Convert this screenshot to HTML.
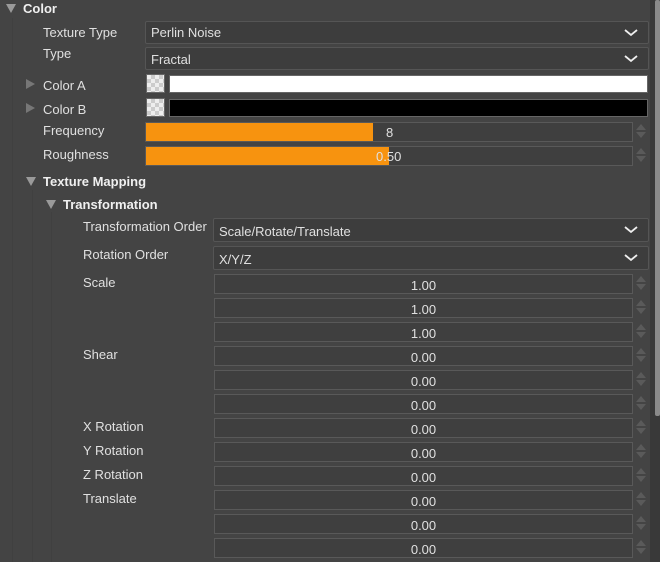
<!DOCTYPE html>
<html><head><style>
body{margin:0;width:660px;height:562px;background:#444;overflow:hidden;position:relative;font-family:"Liberation Sans",sans-serif;font-size:13px;color:#e0e0e0}
div{position:absolute;box-sizing:border-box}
.l{white-space:nowrap}
.h{font-weight:bold;color:#f0f0f0}
.tri{width:0;height:0;border-left:5px solid transparent;border-right:5px solid transparent;border-top:9px solid #9a9a9a}
.rt{width:0;height:0;border-top:5px solid transparent;border-bottom:5px solid transparent;border-left:9px solid #777}
.cb{background:#3d3d3d;border:1px solid #555;border-radius:2px;padding:3px 0 0 5px;font-size:13px}
.cb svg{position:absolute;right:10px;top:7px}
.nf{left:214px;width:419px;height:20px;background:#3f3f3f;border:1px solid #595959;text-align:center;padding-top:3px;padding-left:0}
.sp{width:12px;height:18px}
.sp:before{content:"";position:absolute;left:1px;top:1px;border-left:5px solid transparent;border-right:5px solid transparent;border-bottom:6px solid #5a5a5a}
.sp:after{content:"";position:absolute;left:1px;top:9px;border-left:5px solid transparent;border-right:5px solid transparent;border-top:6px solid #5a5a5a}
.chk{width:19px;height:19px;border:1px solid #666;background-color:#eee;background-image:linear-gradient(45deg,#ccc 25%,transparent 25%,transparent 75%,#ccc 75%),linear-gradient(45deg,#ccc 25%,transparent 25%,transparent 75%,#ccc 75%);background-size:8px 8px;background-position:0 0,4px 4px}
.vl{width:1px;background:#404040}
</style></head><body>
<div class="vl" style="left:12px;top:18px;height:544px"></div>
<div class="vl" style="left:32px;top:190px;height:372px"></div>
<div class="vl" style="left:51px;top:212px;height:350px"></div>

<div class="tri" style="left:6px;top:4px"></div>
<div class="l h" style="left:23px;top:1px;font-size:13px">Color</div>

<div class="l" style="left:43px;top:25px">Texture Type</div>
<div class="cb" style="left:145px;top:21px;width:504px;height:23px">Perlin Noise<svg width="14" height="8"><path d="M1 1L7 6L13 1" stroke="#eee" stroke-width="1.8" fill="none"/></svg></div>
<div class="l" style="left:43px;top:46px">Type</div>
<div class="cb" style="left:145px;top:47px;width:504px;height:23px;padding-top:4px">Fractal<svg width="14" height="8"><path d="M1 1L7 6L13 1" stroke="#eee" stroke-width="1.8" fill="none"/></svg></div>

<div class="rt" style="left:26px;top:79px"></div>
<div class="l" style="left:43px;top:78px">Color A</div>
<div class="chk" style="left:146px;top:74px"></div>
<div style="left:169px;top:75px;width:479px;height:18px;background:#fff;border:1px solid #666"></div>
<div class="rt" style="left:26px;top:103px"></div>
<div class="l" style="left:43px;top:102px">Color B</div>
<div class="chk" style="left:146px;top:98px"></div>
<div style="left:169px;top:99px;width:479px;height:18px;background:#000;border:1px solid #666"></div>

<div class="l" style="left:43px;top:123px">Frequency</div>
<div style="left:145px;top:122px;width:488px;height:20px;background:#3f3f3f;border:1px solid #595959"></div>
<div style="left:146px;top:123px;width:227px;height:18px;background:#f7930f"></div>
<div class="l" style="left:386px;top:125px">8</div>
<div class="sp" style="left:635px;top:123px"></div>
<div class="l" style="left:43px;top:147px">Roughness</div>
<div style="left:145px;top:146px;width:488px;height:20px;background:#3f3f3f;border:1px solid #595959"></div>
<div style="left:146px;top:147px;width:243px;height:18px;background:#f7930f"></div>
<div class="l" style="left:376px;top:149px">0.50</div>
<div class="sp" style="left:635px;top:147px"></div>

<div class="tri" style="left:26px;top:177px"></div>
<div class="l h" style="left:43px;top:174px">Texture Mapping</div>
<div class="tri" style="left:46px;top:200px"></div>
<div class="l h" style="left:63px;top:197px">Transformation</div>

<div class="l" style="left:83px;top:219px">Transformation Order</div>
<div class="cb" style="left:213px;top:218px;width:436px;height:24px;padding-top:5px">Scale/Rotate/Translate<svg width="14" height="8"><path d="M1 1L7 6L13 1" stroke="#eee" stroke-width="1.8" fill="none"/></svg></div>
<div class="l" style="left:83px;top:247px">Rotation Order</div>
<div class="cb" style="left:213px;top:246px;width:436px;height:24px;padding-top:5px">X/Y/Z<svg width="14" height="8"><path d="M1 1L7 6L13 1" stroke="#eee" stroke-width="1.8" fill="none"/></svg></div>

<div class="l" style="left:83px;top:275px">Scale</div>
<div class="l" style="left:83px;top:347px">Shear</div>
<div class="l" style="left:83px;top:419px">X Rotation</div>
<div class="l" style="left:83px;top:443px">Y Rotation</div>
<div class="l" style="left:83px;top:467px">Z Rotation</div>
<div class="l" style="left:83px;top:491px">Translate</div>

<div class="nf" style="top:274px">1.00</div><div class="sp" style="left:635px;top:275px"></div>
<div class="nf" style="top:298px">1.00</div><div class="sp" style="left:635px;top:299px"></div>
<div class="nf" style="top:322px">1.00</div><div class="sp" style="left:635px;top:323px"></div>
<div class="nf" style="top:346px">0.00</div><div class="sp" style="left:635px;top:347px"></div>
<div class="nf" style="top:370px">0.00</div><div class="sp" style="left:635px;top:371px"></div>
<div class="nf" style="top:394px">0.00</div><div class="sp" style="left:635px;top:395px"></div>
<div class="nf" style="top:418px">0.00</div><div class="sp" style="left:635px;top:419px"></div>
<div class="nf" style="top:442px">0.00</div><div class="sp" style="left:635px;top:443px"></div>
<div class="nf" style="top:466px">0.00</div><div class="sp" style="left:635px;top:467px"></div>
<div class="nf" style="top:490px">0.00</div><div class="sp" style="left:635px;top:491px"></div>
<div class="nf" style="top:514px">0.00</div><div class="sp" style="left:635px;top:515px"></div>
<div class="nf" style="top:538px">0.00</div><div class="sp" style="left:635px;top:539px"></div>

<div style="left:650px;top:0;width:10px;height:562px;background:#393939"></div>
<div style="left:655px;top:0;width:5px;height:416px;background:#8a8a8a;border-radius:2px"></div>
</body></html>
